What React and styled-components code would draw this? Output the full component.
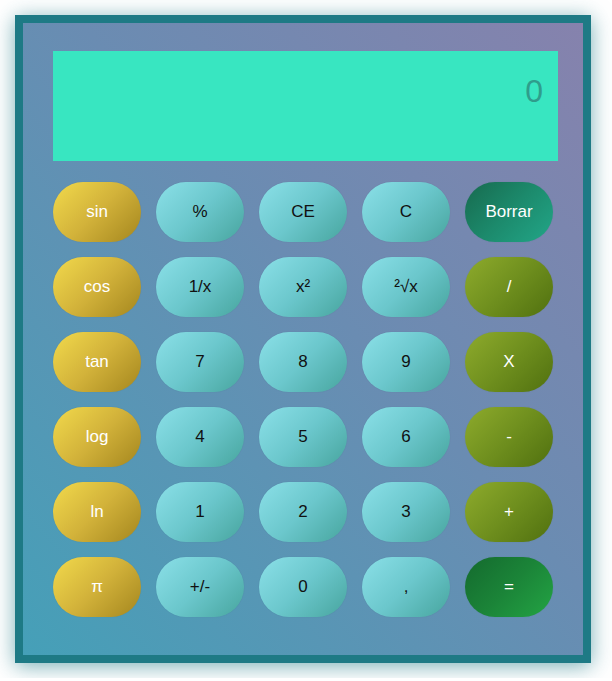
import styled, { createGlobalStyle } from "styled-components";

const GlobalStyle = createGlobalStyle`
  body {
    margin: 0;
    background: #fff;
    font-family: "Liberation Sans", Arial, sans-serif;
  }
`;

const Page = styled.div`
  padding: 15px;
`;

const Calculator = styled.div`
  width: 576px;
  height: 648px;
  box-sizing: border-box;
  border: 8px solid #1e7a85;
  background-image: linear-gradient(to top right, #45a0b8 0%, #6a8cb2 55%, #8682ad 100%);
  box-shadow: 0 3px 20px rgba(30, 122, 133, 0.6);
  padding: 28px 0 0 30px;
`;

const Display = styled.div`
  width: 505px;
  height: 110px;
  box-sizing: border-box;
  background: #38e6c1;
  color: #2f9d8c;
  font-size: 32px;
  text-align: right;
  padding: 22px 15px 0 0;
`;

const Keys = styled.div`
  display: grid;
  grid-template-columns: repeat(5, 88px);
  grid-auto-rows: 60px;
  gap: 15px;
  margin-top: 21px;
`;

const palettes = {
  func: { bg: "linear-gradient(135deg, #f2da4c 0%, #d2b23a 50%, #a4861e 100%)", color: "#fff" },
  num: { bg: "linear-gradient(135deg, #8be0e8 0%, #6bc7cc 50%, #47a59e 100%)", color: "#111" },
  op: { bg: "linear-gradient(135deg, #8eab2c 0%, #6f8f1e 50%, #50700f 100%)", color: "#fff" },
  del: { bg: "linear-gradient(135deg, #176a4e 0%, #1c8a6c 50%, #22a688 100%)", color: "#fff" },
  eq: { bg: "linear-gradient(135deg, #146a2e 0%, #1b8438 50%, #23a444 100%)", color: "#fff" },
};

const Key = styled.button`
  border: none;
  border-radius: 30px;
  background: ${(p) => palettes[p.$kind].bg};
  color: ${(p) => palettes[p.$kind].color};
  font-family: "Liberation Sans", Arial, sans-serif;
  font-size: 17px;
  padding: 0;
  cursor: pointer;
  box-shadow: 0 0 1px rgba(0, 0, 0, 0.15);
`;

const keys = [
  ["sin", "func"], ["%", "num"], ["CE", "num"], ["C", "num"], ["Borrar", "del"],
  ["cos", "func"], ["1/x", "num"], ["x²", "num"], ["²√x", "num"], ["/", "op"],
  ["tan", "func"], ["7", "num"], ["8", "num"], ["9", "num"], ["X", "op"],
  ["log", "func"], ["4", "num"], ["5", "num"], ["6", "num"], ["-", "op"],
  ["ln", "func"], ["1", "num"], ["2", "num"], ["3", "num"], ["+", "op"],
  ["π", "func"], ["+/-", "num"], ["0", "num"], [",", "num"], ["=", "eq"],
];

const App = () => {
  return (
    <Page>
      <GlobalStyle />
      <Calculator>
        <Display>0</Display>
        <Keys>
          {keys.map(([label, kind]) => (
            <Key key={label} $kind={kind}>
              {label}
            </Key>
          ))}
        </Keys>
      </Calculator>
    </Page>
  );
};

export default App;
